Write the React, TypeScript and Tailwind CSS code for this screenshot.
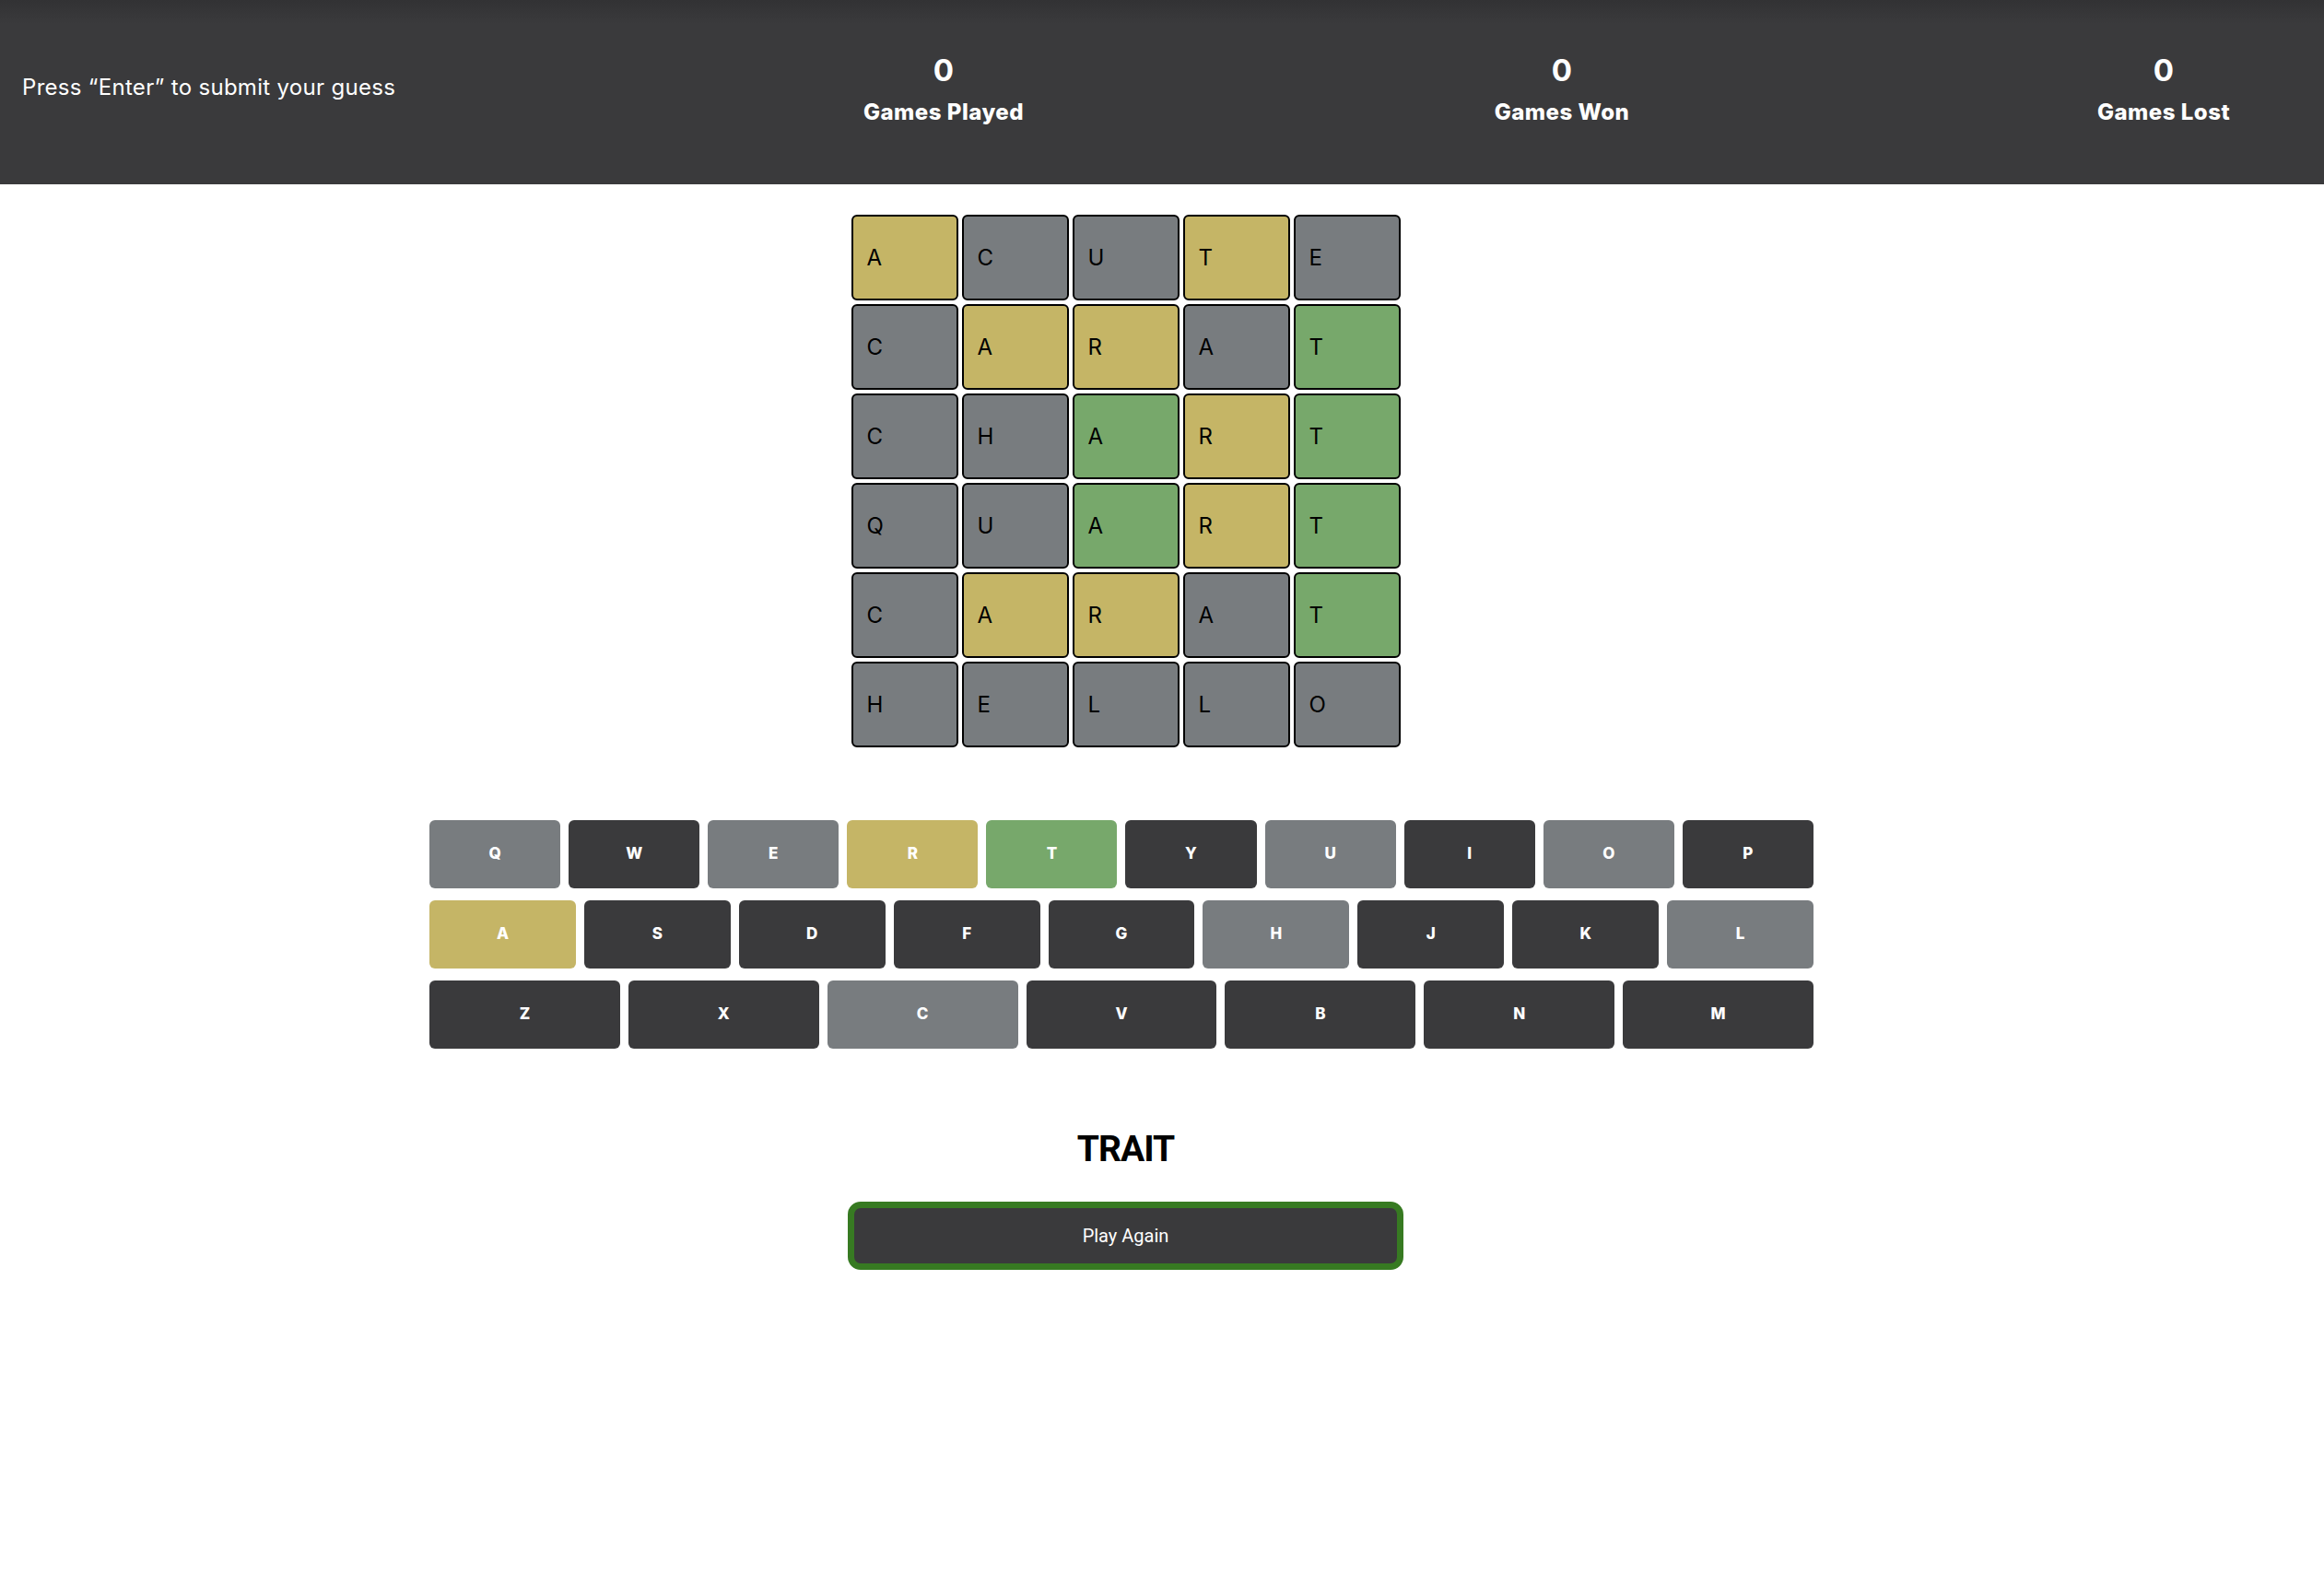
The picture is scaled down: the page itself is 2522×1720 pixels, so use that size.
import React from "react";

type C = "y" | "g" | "n" | "d";

const tileBg: Record<C, string> = {
  y: "bg-[#c5b566]",
  g: "bg-[#787c7f]",
  n: "bg-[#77a86b]",
  d: "bg-[#3a3a3c]",
};

const rows: [string, C[]][] = [
  ["ACUTE", ["y", "g", "g", "y", "g"]],
  ["CARAT", ["g", "y", "y", "g", "n"]],
  ["CHART", ["g", "g", "n", "y", "n"]],
  ["QUART", ["g", "g", "n", "y", "n"]],
  ["CARAT", ["g", "y", "y", "g", "n"]],
  ["HELLO", ["g", "g", "g", "g", "g"]],
];

const keyRows: [string, C][][] = [
  [
    ["Q", "g"], ["W", "d"], ["E", "g"], ["R", "y"], ["T", "n"],
    ["Y", "d"], ["U", "g"], ["I", "d"], ["O", "g"], ["P", "d"],
  ],
  [
    ["A", "y"], ["S", "d"], ["D", "d"], ["F", "d"], ["G", "d"],
    ["H", "g"], ["J", "d"], ["K", "d"], ["L", "g"],
  ],
  [
    ["Z", "d"], ["X", "d"], ["C", "g"], ["V", "d"], ["B", "d"], ["N", "d"], ["M", "d"],
  ],
];

function Stat({ label }: { label: string }) {
  return (
    <div className="w-[300px] flex flex-col items-center text-white">
      <div className="text-[33px] leading-none font-bold">0</div>
      <div className="mt-[17px] text-[24px] leading-none font-extrabold tracking-[0.5px]">{label}</div>
    </div>
  );
}

export default function App() {
  return (
    <div className="min-h-[1720px] bg-white font-['Inter',sans-serif]">
      <header className="h-[200px] flex items-center bg-[linear-gradient(to_bottom,#323234_0px,#3a3a3c_26px)]">
        <div className="w-[874px] pl-6 pb-[11px] text-white text-[24px] leading-none tracking-[0.3px]">
          Press “Enter” to submit your guess
        </div>
        <div className="pb-[6px]">
          <Stat label="Games Played" />
        </div>
        <div className="ml-[371px] pb-[6px]">
          <Stat label="Games Won" />
        </div>
        <div className="ml-[353px] pb-[6px]">
          <Stat label="Games Lost" />
        </div>
      </header>

      <main className="pr-[79px] flex flex-col items-center">
        <div className="mt-[33px] grid grid-cols-[repeat(5,116px)] gap-[4px]">
          {rows.map(([word, colors], r) =>
            word.split("").map((ch, i) => (
              <div
                key={`${r}-${i}`}
                className={`h-[93px] border-2 border-black rounded-md flex items-center pl-[15px] text-black text-[24px] ${tileBg[colors[i]]}`}
              >
                {ch}
              </div>
            ))
          )}
        </div>

        <div className="mt-[79px] mr-[9px] w-[1502px] flex flex-col gap-[13px]">
          {keyRows.map((row, r) => (
            <div key={r} className="flex gap-[9px]">
              {row.map(([k, c]) => (
                <div
                  key={k}
                  className={`flex-1 h-[74px] rounded-md flex items-center justify-center text-white font-extrabold text-[17px] ${tileBg[c]}`}
                >
                  {k}
                </div>
              ))}
            </div>
          ))}
        </div>

        <h2 className="mt-[90px] font-['Roboto',sans-serif] font-bold text-[39px] leading-none tracking-[-1px] text-black">
          TRAIT
        </h2>

        <button className="mt-[37px] w-[603px] h-[74px] rounded-[14px] border-[7px] border-[#377a22] bg-[#3a3a3c] text-white font-['Roboto',sans-serif] text-[20px]">
          Play Again
        </button>
      </main>
    </div>
  );
}
